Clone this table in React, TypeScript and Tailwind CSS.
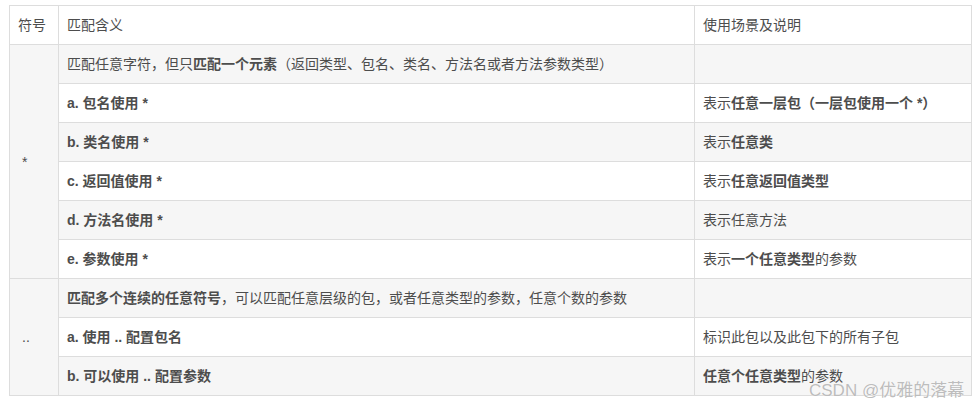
type Part = { t: string; b?: boolean };

const rows: { sym?: string; span?: number; mid: Part[]; right: Part[] }[] = [
  {
    sym: "*",
    span: 6,
    mid: [
      { t: "匹配任意字符，但只" },
      { t: "匹配一个元素", b: true },
      { t: "（返回类型、包名、类名、方法名或者方法参数类型）" },
    ],
    right: [],
  },
  { mid: [{ t: "a. 包名使用 *", b: true }], right: [{ t: "表示" }, { t: "任意一层包（一层包使用一个 *）", b: true }] },
  { mid: [{ t: "b. 类名使用 *", b: true }], right: [{ t: "表示" }, { t: "任意类", b: true }] },
  { mid: [{ t: "c. 返回值使用 *", b: true }], right: [{ t: "表示" }, { t: "任意返回值类型", b: true }] },
  { mid: [{ t: "d. 方法名使用 *", b: true }], right: [{ t: "表示任意方法" }] },
  { mid: [{ t: "e. 参数使用 *", b: true }], right: [{ t: "表示" }, { t: "一个任意类型", b: true }, { t: "的参数" }] },
  {
    sym: "..",
    span: 3,
    mid: [
      { t: "匹配多个连续的任意符号", b: true },
      { t: "，可以匹配任意层级的包，或者任意类型的参数，任意个数的参数" },
    ],
    right: [],
  },
  { mid: [{ t: "a. 使用 .. 配置包名", b: true }], right: [{ t: "标识此包以及此包下的所有子包" }] },
  { mid: [{ t: "b. 可以使用 .. 配置参数", b: true }], right: [{ t: "任意个任意类型", b: true }, { t: "的参数" }] },
];

function Text({ parts }: { parts: Part[] }) {
  return (
    <>
      {parts.map((p, i) =>
        p.b ? (
          <strong key={i} className="font-bold text-[#4d4d4d]">
            {p.t}
          </strong>
        ) : (
          <span key={i}>{p.t}</span>
        )
      )}
    </>
  );
}

const cell = "border border-[#dddddd] px-2 py-2 text-left align-middle";

export default function App() {
  return (
    <div
      className="relative h-[411px] w-[979px] bg-white pl-[9px] pt-[5px] text-[14px] leading-[22px] text-[#4d4d4d]"
      style={{ fontFamily: '"Liberation Sans", "Noto Sans CJK SC", sans-serif' }}
    >
      <table className="w-[962px] table-fixed border-collapse">
        <colgroup>
          <col className="w-[49px]" />
          <col className="w-[636px]" />
          <col className="w-[277px]" />
        </colgroup>
        <thead>
          <tr className="bg-white">
            <th className={`${cell} font-normal`}>符号</th>
            <th className={`${cell} font-normal`}>匹配含义</th>
            <th className={`${cell} font-normal`}>使用场景及说明</th>
          </tr>
        </thead>
        <tbody>
          {rows.map((r, i) => (
            <tr key={i} className={i % 2 === 0 ? "bg-[#f6f6f6]" : "bg-white"}>
              {r.sym && (
                <td rowSpan={r.span} className={`${cell} bg-[#f6f6f6] pl-3`}>
                  {r.sym}
                </td>
              )}
              <td className={`${cell} whitespace-nowrap`}>
                <Text parts={r.mid} />
              </td>
              <td className={`${cell} whitespace-nowrap`}>
                <Text parts={r.right} />
              </td>
            </tr>
          ))}
        </tbody>
      </table>
      <div className="absolute left-[809px] top-[380px] text-[17px] leading-[22px] text-[#b4b4b4]/90 [text-shadow:0_0_1px_#fff]">
        CSDN @优雅的落幕
      </div>
    </div>
  );
}
